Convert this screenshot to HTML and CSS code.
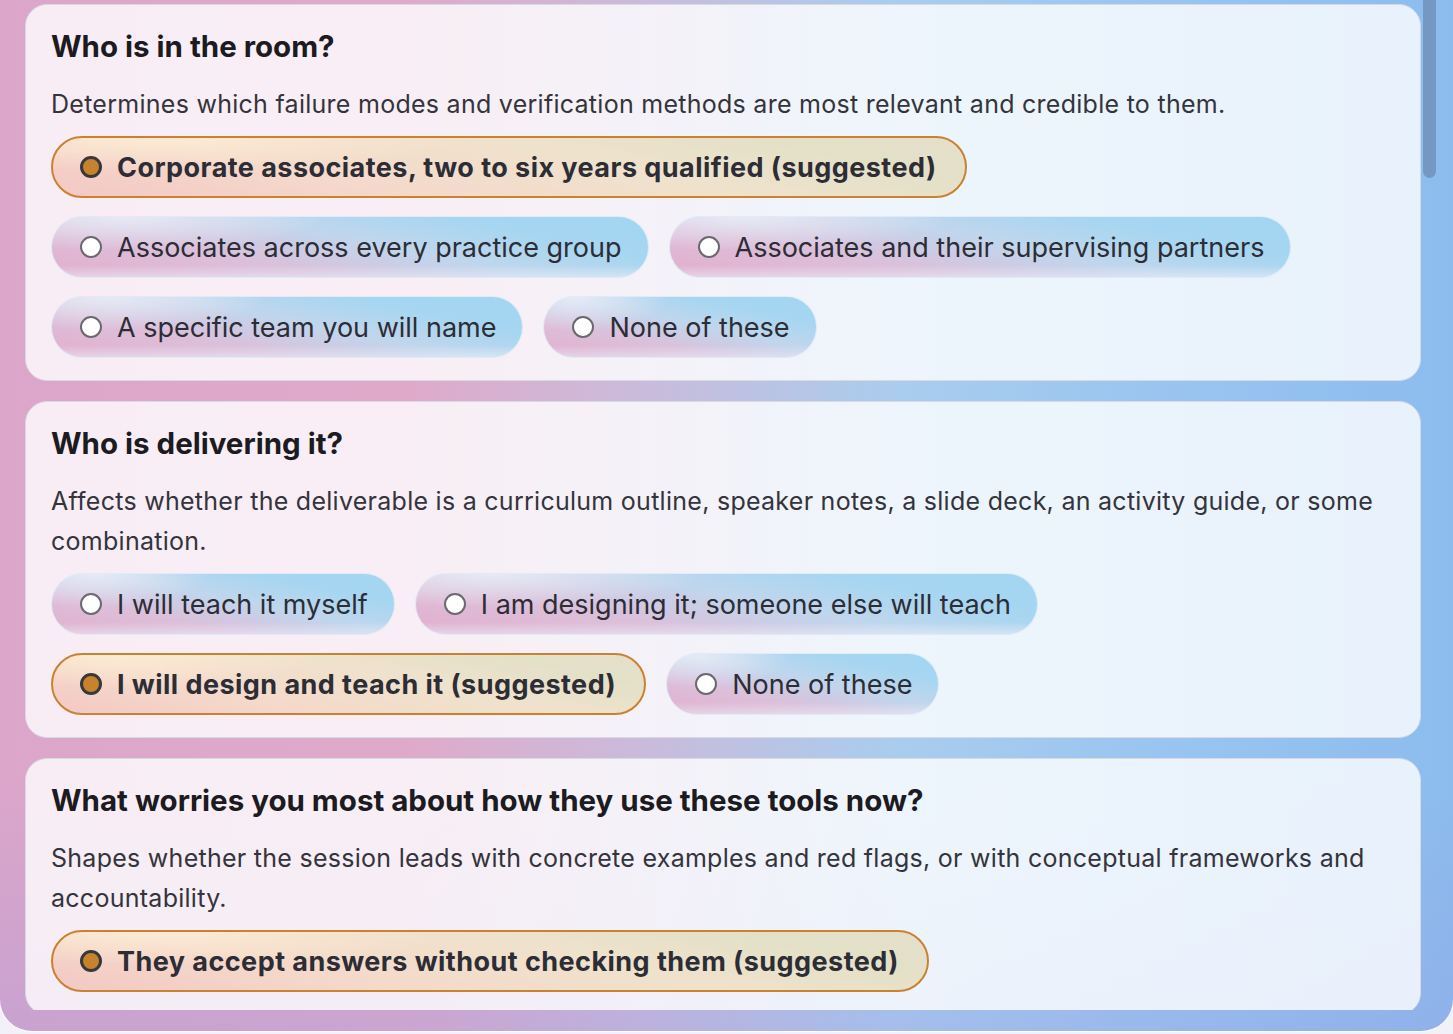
FILE: index.html
```html
<!DOCTYPE html>
<html lang="en">
<head>
<meta charset="utf-8">
<title>Questions</title>
<link rel="stylesheet" href="styles.css">
</head>
<body>
<div class="window">
  <div class="scroller">
    <div class="content">
      <section class="card">
        <h2 class="title">Who is in the room?</h2>
        <p class="desc">Determines which failure modes and verification methods are most relevant and credible to them.</p>
        <div class="options">
          <div class="pill selected"><span class="radio"></span><span class="label">Corporate associates, two to six years qualified (suggested)</span></div>
          <div class="pill"><span class="radio"></span><span class="label">Associates across every practice group</span></div>
          <div class="pill"><span class="radio"></span><span class="label">Associates and their supervising partners</span></div>
          <div class="pill"><span class="radio"></span><span class="label">A specific team you will name</span></div>
          <div class="pill"><span class="radio"></span><span class="label">None of these</span></div>
        </div>
      </section>
      <section class="card">
        <h2 class="title">Who is delivering it?</h2>
        <p class="desc">Affects whether the deliverable is a curriculum outline, speaker notes, a slide deck, an activity guide, or some combination.</p>
        <div class="options">
          <div class="pill"><span class="radio"></span><span class="label">I will teach it myself</span></div>
          <div class="pill"><span class="radio"></span><span class="label">I am designing it; someone else will teach</span></div>
          <div class="pill selected"><span class="radio"></span><span class="label">I will design and teach it (suggested)</span></div>
          <div class="pill"><span class="radio"></span><span class="label">None of these</span></div>
        </div>
      </section>
      <section class="card">
        <h2 class="title">What worries you most about how they use these tools now?</h2>
        <p class="desc">Shapes whether the session leads with concrete examples and red flags, or with conceptual frameworks and accountability.</p>
        <div class="options">
          <div class="pill selected"><span class="radio"></span><span class="label">They accept answers without checking them (suggested)</span></div>
        </div>
      </section>
    </div>
    <div class="track"><div class="thumb"></div></div>
  </div>
</div>
</body>
</html>
```
FILE: styles.css
```css
* { box-sizing: border-box; }
html, body { margin: 0; padding: 0; }
body {
  background: #f2f1f7;
  font-family: Inter, "Noto Sans", "Liberation Sans", sans-serif;
  width: 1453px;
  height: 1034px;
  overflow: hidden;
}
.window {
  height: 1031px;
  width: 1453px;
  border-radius: 0 0 32px 32px;
  background:
    linear-gradient(180deg, rgba(150,150,225,0) 75%, rgba(150,150,225,0.28) 100%),
    linear-gradient(90deg, #dca6ca 0%, #dfaaca 28%, #c9bcdc 45%, #a9cdee 62%, #98c4f0 82%, #8cbcee 100%);
  padding: 0 0 21px 25px;
  display: flex;
  box-shadow: 0 0 0 1px rgba(255,255,255,0.7);
}
.scroller {
  display: flex;
  height: 1010px;
}
.content {
  width: 1396px;
  height: 1010px;
  overflow: hidden;
  padding-top: 4px;
  display: flex;
  flex-direction: column;
  gap: 20px;
}
.track {
  width: 31px;
  padding-left: 2px;
}
.thumb {
  width: 13px;
  height: 178px;
  border-radius: 0 0 7px 7px;
  background: rgba(110,140,180,0.75);
}
.card {
  flex: none;
  background: rgba(255,255,255,0.8);
  border: 1.5px solid #d9d9e3;
  border-radius: 22px;
  padding: 21px 25px 22px 25px;
}
.title {
  margin: 0;
  font-size: 29.5px;
  line-height: 40px;
  font-weight: 700;
  color: #1b1b21;
  letter-spacing: 0;
}
.desc {
  margin: 18px 0 12px 0;
  font-size: 25px;
  line-height: 40px;
  color: #34343c;
  letter-spacing: 0.27px;
}
.options {
  display: flex;
  flex-wrap: wrap;
  gap: 18px 20px;
}
.pill {
  height: 62px;
  border-radius: 31px;
  display: flex;
  align-items: center;
  gap: 15px;
  padding: 0 26px 0 28px;
  font-size: 27px;
  color: #2d2d35;
  border: 1px solid rgba(225,236,248,0.9);
  background:
    radial-gradient(ellipse 45% 75% at 12% 0%, rgba(232,236,246,0.95), rgba(232,236,246,0) 75%),
    linear-gradient(180deg, rgba(255,255,255,0) 80%, rgba(235,240,250,0.55) 100%),
    linear-gradient(12deg, #e3aecd 0%, #dcbfda 30%, #c0d6ed 55%, #a6d6f1 78%, #a3d5f1 100%);
}
.pill .radio {
  flex: none;
  width: 22px;
  height: 22px;
  border-radius: 50%;
  background: #ffffff;
  border: 2px solid #6a6a6e;
}
.pill.selected {
  font-weight: 700;
  letter-spacing: 0.45px;
  border: 2px solid #c9822f;
  padding: 0 28px 0 27px;
  background:
    radial-gradient(ellipse 45% 75% at 12% 0%, rgba(252,236,212,0.95), rgba(252,236,212,0) 75%),
    linear-gradient(12deg, #f3c8c4 0%, #f5d9cb 30%, #efe2cc 60%, #e3e0c8 85%, #e6dfca 100%);
}
.pill.selected .radio {
  background: #c6822d;
  border: 3.5px solid #38373b;
}
.label { white-space: nowrap; }
```
